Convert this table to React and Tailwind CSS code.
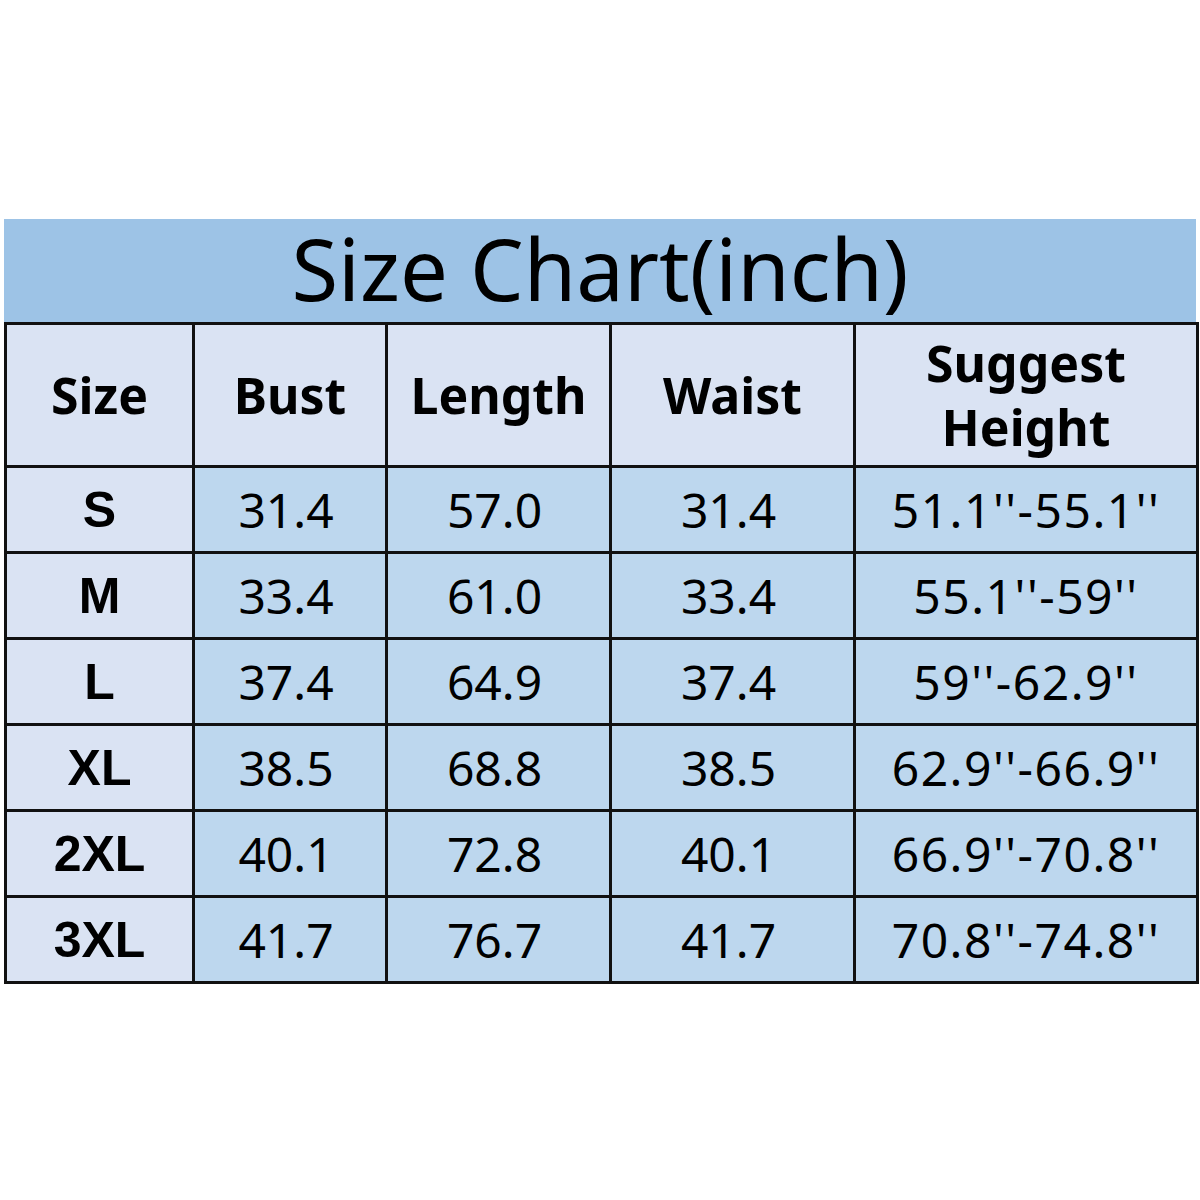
import React from 'react';

const rows = [
  ['S', '31.4', '57.0', '31.4', "51.1''-55.1''"],
  ['M', '33.4', '61.0', '33.4', "55.1''-59''"],
  ['L', '37.4', '64.9', '37.4', "59''-62.9''"],
  ['XL', '38.5', '68.8', '38.5', "62.9''-66.9''"],
  ['2XL', '40.1', '72.8', '40.1', "66.9''-70.8''"],
  ['3XL', '41.7', '76.7', '41.7', "70.8''-74.8''"],
];

const widths = ['w-[188px]', 'w-[193px]', 'w-[224px]', 'w-[244px]', 'w-[343px]'];

export default function App() {
  return (
    <div className="w-[1200px] h-[1200px] bg-white pt-[219px] pl-[4px]" style={{ fontFamily: '"Noto Sans", "Open Sans", sans-serif' }}>
      <div className="w-[1192px]">
        <div className="h-[103px] bg-[#9dc3e6] flex items-center justify-center text-[85px] leading-none text-black pb-[4px]">
          Size Chart(inch)
        </div>
        <table className="w-[1192px] border-collapse table-fixed text-black">
          <thead>
            <tr className="h-[143px]">
              {['Size', 'Bust', 'Length', 'Waist'].map((h, i) => (
                <th key={h} className={`${widths[i]} border-[3px] border-[#111] bg-[#dae3f3] text-[50px] font-bold leading-none`}>
                  {h}
                </th>
              ))}
              <th className={`${widths[4]} border-[3px] border-[#111] bg-[#dae3f3] text-[50px] font-bold leading-[64px]`}>
                Suggest<br />Height
              </th>
            </tr>
          </thead>
          <tbody>
            {rows.map((r) => (
              <tr key={r[0]} className="h-[86px]">
                <td className="border-[3px] border-[#111] bg-[#dae3f3] text-center text-[50px] font-bold leading-none" style={{ fontFamily: '"Liberation Sans", Arial, sans-serif' }}>
                  {r[0]}
                </td>
                {r.slice(1, 4).map((v, j) => (
                  <td key={j} className="border-[3px] border-[#111] bg-[#bdd7ee] text-center text-[48px] leading-none pr-[8px]">
                    {v}
                  </td>
                ))}
                <td className="border-[3px] border-[#111] bg-[#bdd7ee] text-center text-[48px] leading-none tracking-[1.5px]">
                  {r[4]}
                </td>
              </tr>
            ))}
          </tbody>
        </table>
      </div>
    </div>
  );
}
